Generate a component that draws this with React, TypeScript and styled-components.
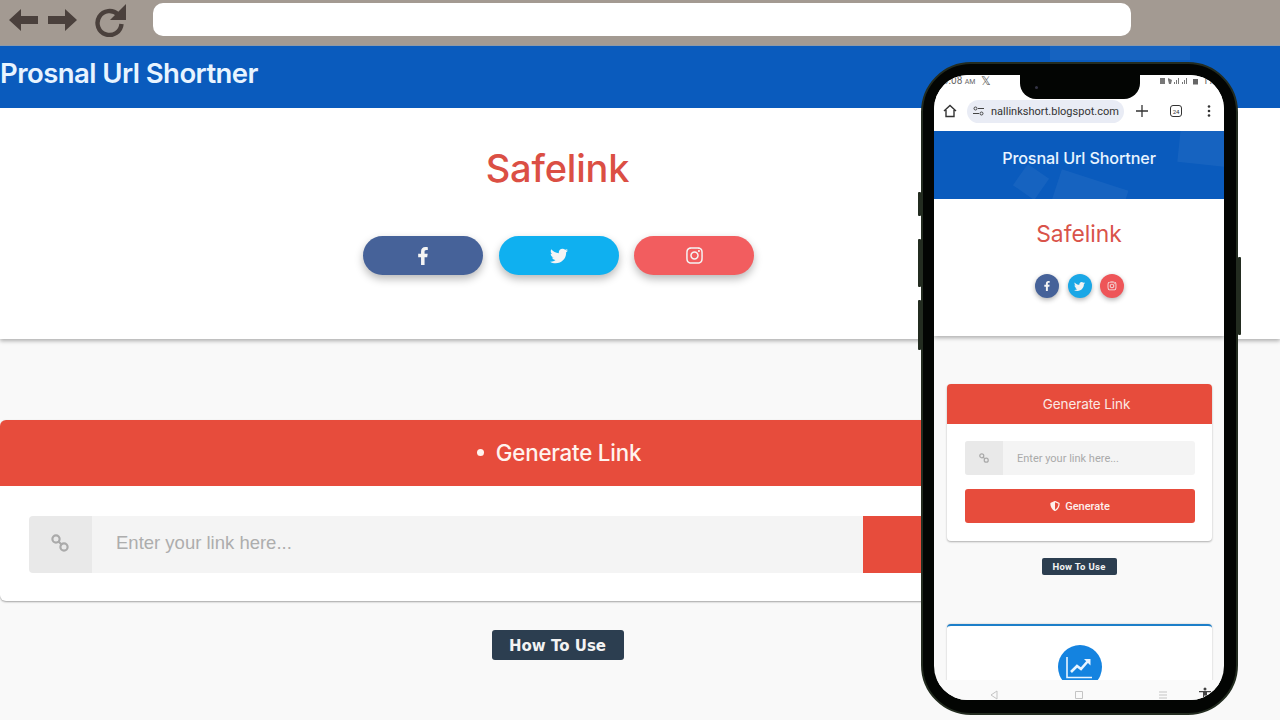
import { FaFacebookF, FaInstagram, FaShieldAlt, FaTwitter } from 'react-icons/fa';
import styled, { createGlobalStyle } from 'styled-components';

const GlobalStyle = createGlobalStyle`
    html, body {
        margin: 0;
        height: 720px;
        overflow: hidden;
        background: #f9f9f9;
        font-family: "Inter", "Liberation Sans", sans-serif;
    }
`;

// two small rings joined on the diagonal, the reference's chain glyph
const ChainIcon = ({ size }: { size: number }) => (
    <svg width={size} height={size} viewBox="0 0 18 18">
        <circle cx="5" cy="5" r="3.6" fill="none" stroke="currentColor" strokeWidth="2.2" />
        <circle cx="13" cy="13" r="3.6" fill="none" stroke="currentColor" strokeWidth="2.2" />
        <path d="M7 7l4 4" stroke="currentColor" strokeWidth="2.2" />
    </svg>
);

const App = () => {
    return (
        <Page>
            <GlobalStyle />
            <BrowserBar>
                <NavIcons>
                    <svg width="29" height="24" viewBox="0 0 29 24"><path d="M0 12 12 1v7h17v8H12v7z" fill="#4a403c" /></svg>
                    <svg width="29" height="24" viewBox="0 0 29 24"><path d="M29 12 17 1v7H0v8h17v7z" fill="#4a403c" /></svg>
                    <ReloadIcon width="34" height="34" viewBox="0 0 34 34">
                        <path d="M24 11.500A12 12 0 1 0 27.500 21" fill="none" stroke="#4a403c" strokeWidth="4.400" />
                        <path d="M32 1v16H16z" fill="#4a403c" />
                    </ReloadIcon>
                </NavIcons>
                <UrlBar />
            </BrowserBar>

            <SiteHeader>
                <Deco $x={1050} $y={-6} $w={140} $h={20} $rotate={0} />
                <SiteTitle>Prosnal Url Shortner</SiteTitle>
            </SiteHeader>

            <Hero>
                <HeroTitle>Safelink</HeroTitle>
                <SocialRow>
                    <SocialPill $color="#466299"><FaFacebookF size={18} /></SocialPill>
                    <SocialPill $color="#0fb0f0"><FaTwitter size={18} /></SocialPill>
                    <SocialPill $color="#f25d5f"><FaInstagram size={19} /></SocialPill>
                </SocialRow>
            </Hero>

            <Main>
                <Card>
                    <CardHead><Bullet />Generate Link</CardHead>
                    <CardBody>
                        <IconBox><ChainIcon size={18} /></IconBox>
                        <FakeInput>Enter your link here...</FakeInput>
                        <SubmitBlock />
                    </CardBody>
                </Card>
                <HowTo>How To Use</HowTo>
            </Main>

            <Phone>
                <SideKey $side="left" $top={128} $h={24} />
                <SideKey $side="left" $top={175} $h={48} />
                <SideKey $side="left" $top={236} $h={50} />
                <SideKey $side="right" $top={193} $h={78} />
                <Screen>
                    <Notch><NotchDot /></Notch>
                    <StatusBar>
                        <StatusTime>9:08 <small>AM</small></StatusTime>
                        <StatusX>𝕏</StatusX>
                        <StatusRight>
                            <svg width="40" height="8" viewBox="0 0 40 8">
                                <path d="M0 1h5v6H0zM8 1l4 2-1 4H9L8 3zM14 7V5h1v2zM16 7V3h1v4zM18 7V1h1v6zM22 7V5h1v2zM24 7V3h1v4zM26 7V1h1v6z" fill="#777" />
                                <path d="M33 2h5v5.500h-5z" fill="#666" />
                            </svg>
                            <span>17</span>
                        </StatusRight>
                    </StatusBar>
                    <Toolbar>
                        <svg width="14" height="14" viewBox="0 0 14 14"><path d="M1 7 7 1.500 13 7M3 6v6.500h8V6" fill="none" stroke="#333" strokeWidth="1.400" /></svg>
                        <Omnibox>
                            <svg width="11" height="10" viewBox="0 0 11 10">
                                <circle cx="2.500" cy="2.500" r="1.500" fill="none" stroke="#444" />
                                <circle cx="8.500" cy="7.500" r="1.500" fill="none" stroke="#444" />
                                <path d="M5 2.500h6M0 7.500h6" stroke="#444" />
                            </svg>
                            <OmniText>nallinkshort.blogspot.com</OmniText>
                        </Omnibox>
                        <PlusIcon width="12" height="12" viewBox="0 0 12 12"><path d="M6 0v12M0 6h12" stroke="#333" strokeWidth="1.300" /></PlusIcon>
                        <TabCount>24</TabCount>
                        <MenuDots width="4" height="12" viewBox="0 0 4 12"><circle cx="2" cy="1.500" r="1.300" fill="#333" /><circle cx="2" cy="6" r="1.300" fill="#333" /><circle cx="2" cy="10.500" r="1.300" fill="#333" /></MenuDots>
                    </Toolbar>

                    <MiniHeader>
                        <Deco $x={245} $y={-2} $w={60} $h={36} $rotate={6} />
                        <Deco $x={84} $y={38} $w={26} $h={26} $rotate={35} />
                        <Deco $x={120} $y={48} $w={70} $h={40} $rotate={18} />
                        Prosnal Url Shortner
                    </MiniHeader>
                    <MiniHero>
                        <MiniTitle>Safelink</MiniTitle>
                        <MiniSocial>
                            <SocialDot $color="#466299"><FaFacebookF size={10} /></SocialDot>
                            <SocialDot $color="#1aa7e6"><FaTwitter size={11} /></SocialDot>
                            <SocialDot $color="#ee5558"><FaInstagram size={10} /></SocialDot>
                        </MiniSocial>
                    </MiniHero>

                    <MiniMain>
                        <MiniCard>
                            <MiniCardHead>Generate Link</MiniCardHead>
                            <MiniCardBody>
                                <MiniInput>
                                    <MiniIconBox><ChainIcon size={10} /></MiniIconBox>
                                    <MiniPlaceholder>Enter your link here...</MiniPlaceholder>
                                </MiniInput>
                                <MiniGenerate><FaShieldAlt size={10} />Generate</MiniGenerate>
                            </MiniCardBody>
                        </MiniCard>
                        <MiniHowTo>How To Use</MiniHowTo>
                        <StatsCard>
                            <StatsCircle>
                                <svg width="27" height="23" viewBox="0 0 27 23">
                                    <path d="M1 1v20.500h25" fill="none" stroke="currentColor" strokeWidth="1.600" />
                                    <path d="M5 16l6-6 4 3 7-8" fill="none" stroke="currentColor" strokeWidth="2.600" />
                                    <path d="M18 3h6.500v6.500z" fill="currentColor" />
                                </svg>
                            </StatsCircle>
                        </StatsCard>
                    </MiniMain>

                    <SoftNav>
                        <svg width="10" height="10" viewBox="0 0 10 10"><path d="M8 1 2 5l6 4z" fill="none" stroke="#c4c4c4" /></svg>
                        <NavSquare width="10" height="10" viewBox="0 0 10 10"><path d="M1.500 1.500h7v7h-7z" fill="none" stroke="#c4c4c4" /></NavSquare>
                        <NavMenu width="10" height="10" viewBox="0 0 10 10"><path d="M1 2h8M1 5h8M1 8h8" stroke="#c4c4c4" /></NavMenu>
                        <NavPerson width="12" height="12" viewBox="0 0 12 12"><circle cx="6" cy="2" r="1.500" fill="#444" /><path d="M0 4h12v1.300H8V12H6.800V8.500H5.200V12H4V5.300H0z" fill="#444" /></NavPerson>
                    </SoftNav>
                </Screen>
            </Phone>
        </Page>
    );
};
export default App;

const Page = styled.div`
    position: relative;
    width: 1280px;
    height: 720px;
    overflow: hidden;
    display: flex;
    flex-direction: column;
`;

const BrowserBar = styled.div`
    height: 46px;
    box-sizing: border-box;
    flex: none;
    display: flex;
    align-items: flex-start;
    padding: 3px 149px 0 9px;
    background: #a39a92;
    border-bottom: 1px solid #8e9aa8;
`;

const NavIcons = styled.div`
    display: flex;
    align-items: center;
    gap: 10px;
    width: 144px;
    flex: none;
    height: 32px;
    padding-top: 1px;
`;

const ReloadIcon = styled.svg`
    margin-left: 7px;
`;

const UrlBar = styled.div`
    flex: 1;
    height: 33px;
    border-radius: 10px;
    background: #fff;
`;

const SiteHeader = styled.header`
    position: relative;
    overflow: hidden;
    height: 62px;
    flex: none;
    display: flex;
    align-items: center;
    background: #0a5bbd;
    z-index: 1;
`;

const Deco = styled.span<{ $x: number; $y: number; $w: number; $h: number; $rotate: number }>`
    position: absolute;
    left: ${p => p.$x}px;
    top: ${p => p.$y}px;
    width: ${p => p.$w}px;
    height: ${p => p.$h}px;
    transform: rotate(${p => p.$rotate}deg);
    background: rgba(255, 255, 255, 0.05);
`;

const SiteTitle = styled.h1`
    margin: 0 0 6px;
    color: #e8f4ff;
    font-size: 27.500px;
    font-weight: 600;
    line-height: 1;
    letter-spacing: -0.55px;
    white-space: nowrap;
`;

const Hero = styled.section`
    height: 231px;
    box-sizing: border-box;
    flex: none;
    padding: 36px 165px 0 0;
    display: flex;
    flex-direction: column;
    align-items: center;
    background: #fff;
    box-shadow: 0 2px 4px rgba(0, 0, 0, 0.3);
`;

const HeroTitle = styled.h2`
    margin: 0;
    height: 48px;
    color: #db4f44;
    font-size: 38px;
    font-weight: 500;
    line-height: 48px;
    letter-spacing: -0.2px;
`;

const SocialRow = styled.div`
    display: flex;
    gap: 15.500px;
    margin: 44px 0 0 2px;
`;

const SocialPill = styled.span<{ $color: string }>`
    width: 120px;
    height: 39px;
    border-radius: 20px;
    display: flex;
    align-items: center;
    justify-content: center;
    color: #f4f4f4;
    background: ${p => p.$color};
    box-shadow: 0 4px 8px rgba(0, 0, 0, 0.28);
`;

const Main = styled.main`
    width: 1115px;
    padding-top: 81px;
    display: flex;
    flex-direction: column;
    align-items: center;
`;

const Card = styled.section`
    width: 100%;
    height: 181px;
    border-radius: 6px;
    overflow: hidden;
    background: #fff;
    box-shadow: 0 1px 2px rgba(0, 0, 0, 0.35);
`;

const CardHead = styled.div`
    height: 66px;
    padding: 0 0 2px 3px;
    box-sizing: border-box;
    display: flex;
    align-items: center;
    justify-content: center;
    gap: 12px;
    color: #fff3ee;
    background: #e74c3c;
    font-size: 22.300px;
    font-weight: 500;
    letter-spacing: -0.2px;
`;

const Bullet = styled.span`
    width: 7px;
    height: 7px;
    border-radius: 50%;
    background: #fff3ee;
`;

const CardBody = styled.div`
    display: flex;
    height: 57px;
    margin: 30px 0 0 29px;
`;

const IconBox = styled.div`
    width: 63px;
    box-sizing: border-box;
    padding: 0 2px 3px 0;
    flex: none;
    display: flex;
    align-items: center;
    justify-content: center;
    border-radius: 4px 0 0 4px;
    color: #aaa;
    background: #e9e9e9;
`;

const FakeInput = styled.div`
    flex: 1;
    padding: 0 0 3px 24px;
    display: flex;
    align-items: center;
    color: #adadad;
    background: #f4f4f4;
    font-family: "Liberation Sans", Arial, sans-serif;
    font-size: 18.500px;
`;

const SubmitBlock = styled.div`
    width: 252px;
    flex: none;
    background: #e74c3c;
`;

const HowTo = styled.div`
    width: 132px;
    height: 30px;
    margin-top: 29px;
    padding-top: 1px;
    box-sizing: border-box;
    border-radius: 3px;
    display: flex;
    align-items: center;
    justify-content: center;
    color: #f3f3f3;
    background: #2c3e50;
    font-family: "DejaVu Sans", sans-serif;
    font-size: 15px;
    font-weight: 700;
`;

const Phone = styled.div`
    position: absolute;
    z-index: 2;
    left: 921px;
    top: 62px;
    width: 317px;
    height: 653px;
    box-sizing: border-box;
    border: 2px solid #232c20;
    border-radius: 50px;
    background: #030503;
    padding: 11px 12px 13px 11px;
`;

const SideKey = styled.span<{ $side: 'left' | 'right'; $top: number; $h: number }>`
    position: absolute;
    ${p => p.$side}: -5px;
    top: ${p => p.$top}px;
    width: 3px;
    height: ${p => p.$h}px;
    border-radius: 1px;
    background: #232c20;
`;

const Screen = styled.div`
    position: relative;
    height: 100%;
    display: flex;
    flex-direction: column;
    overflow: hidden;
    border-radius: 34px;
    background: #f9f9f9;
    font-family: "Inter", sans-serif;
`;

const Notch = styled.div`
    position: absolute;
    z-index: 3;
    top: 0;
    left: 86px;
    width: 120px;
    height: 24px;
    display: flex;
    align-items: center;
    justify-content: flex-start;
    padding-left: 15px;
    box-sizing: border-box;
    border-radius: 0 0 16px 16px;
    background: #030503;
`;

const NotchDot = styled.span`
    width: 3px;
    height: 3px;
    border-radius: 50%;
    background: #334;
`;

const StatusBar = styled.div`
    height: 22px;
    flex: none;
    display: flex;
    align-items: center;
    gap: 6px;
    padding: 0 0 11px 9px;
    box-sizing: border-box;
    background: #fff;
    color: #666;
    font-family: "Roboto", sans-serif;
    font-size: 10px;
`;

const StatusTime = styled.span`
    small {
        font-size: 7px;
    }
`;

const StatusX = styled.span`
    color: #555;
    font-size: 12px;
`;

const StatusRight = styled.span`
    margin-left: auto;
    margin-right: 9px;
    display: flex;
    align-items: center;
    gap: 3px;
    font-size: 10px;
    letter-spacing: 0.5px;
`;

const Toolbar = styled.div`
    height: 34px;
    flex: none;
    box-sizing: border-box;
    padding: 0 0 6px 9px;
    display: flex;
    align-items: center;
    background: #fff;
`;

const Omnibox = styled.div`
    width: 157px;
    height: 23px;
    flex: none;
    margin-left: 10px;
    box-sizing: border-box;
    padding-left: 6px;
    border-radius: 12px;
    display: flex;
    align-items: center;
    gap: 7px;
    background: #e9ecf5;
`;

const OmniText = styled.span`
    color: #333;
    font-family: "Roboto", sans-serif;
    font-size: 11px;
    white-space: nowrap;
`;

const PlusIcon = styled.svg`
    margin-left: 12px;
`;

const TabCount = styled.span`
    width: 10px;
    height: 10px;
    margin-left: 22px;
    border: 1.300px solid #333;
    border-radius: 3px;
    display: flex;
    align-items: center;
    justify-content: center;
    color: #333;
    font-family: "Roboto", sans-serif;
    font-size: 6px;
`;

const MenuDots = styled.svg`
    margin-left: 25px;
`;

const MiniHeader = styled.div`
    position: relative;
    overflow: hidden;
    height: 68px;
    flex: none;
    box-sizing: border-box;
    padding-top: 17px;
    text-align: center;
    color: #e8f4ff;
    background: #0a5bbd;
    font-size: 16.200px;
    font-weight: 500;
    letter-spacing: -0.15px;
`;

const MiniHero = styled.div`
    height: 137px;
    flex: none;
    box-sizing: border-box;
    padding-top: 21px;
    display: flex;
    flex-direction: column;
    align-items: center;
    background: #fff;
    box-shadow: 0 2px 4px rgba(0, 0, 0, 0.3);
`;

const MiniTitle = styled.div`
    color: #d9534a;
    font-size: 22.800px;
    line-height: 28px;
`;

const MiniSocial = styled.div`
    display: flex;
    gap: 8.500px;
    margin: 26px 0 0 1px;
`;

const SocialDot = styled.span<{ $color: string }>`
    width: 24px;
    height: 24px;
    border-radius: 50%;
    display: flex;
    align-items: center;
    justify-content: center;
    color: #f3f3f3;
    background: ${p => p.$color};
    box-shadow: 0 2px 5px rgba(0, 0, 0, 0.3);
`;

const MiniMain = styled.div`
    flex: 1;
    min-height: 0;
    overflow: hidden;
    padding: 48px 12px 0 13px;
    display: flex;
    flex-direction: column;
    align-items: center;
`;

const MiniCard = styled.div`
    width: 100%;
    flex: none;
    height: 157px;
    border-radius: 4px;
    overflow: hidden;
    background: #fff;
    box-shadow: 0 1px 2px rgba(0, 0, 0, 0.3);
`;

const MiniCardHead = styled.div`
    height: 40px;
    box-sizing: border-box;
    padding-left: 14px;
    display: flex;
    align-items: center;
    justify-content: center;
    color: #fbe9e4;
    background: #e74c3c;
    font-size: 13.500px;
    letter-spacing: -0.1px;
`;

const MiniCardBody = styled.div`
    padding: 17px 17px 0 18px;
    display: flex;
    flex-direction: column;
    gap: 14px;
`;

const MiniInput = styled.div`
    height: 34px;
    display: flex;
    border-radius: 3px;
    overflow: hidden;
    background: #f4f4f4;
`;

const MiniIconBox = styled.span`
    width: 38px;
    display: flex;
    align-items: center;
    justify-content: center;
    color: #aaa;
    background: #e9e9e9;
`;

const MiniPlaceholder = styled.span`
    padding-left: 14px;
    align-self: center;
    color: #aaa;
    font-family: "Roboto", sans-serif;
    font-size: 11px;
`;

const MiniGenerate = styled.div`
    height: 34px;
    border-radius: 3px;
    display: flex;
    align-items: center;
    justify-content: center;
    gap: 5px;
    color: #fdf0ec;
    background: #e74c3c;
    font-family: "Roboto", sans-serif;
    font-size: 11px;
    font-weight: 500;
`;

const MiniHowTo = styled.div`
    width: 75px;
    height: 17px;
    flex: none;
    margin: 17px 0 0 -1px;
    border-radius: 2px;
    display: flex;
    align-items: center;
    justify-content: center;
    color: #f3f3f3;
    background: #2c3e50;
    font-family: "Roboto", sans-serif;
    font-size: 9.500px;
    font-weight: 700;
    letter-spacing: 0.3px;
`;

const StatsCard = styled.div`
    width: 100%;
    flex: none;
    height: 80px;
    margin-top: 49px;
    box-sizing: border-box;
    padding-top: 19px;
    display: flex;
    justify-content: center;
    border-top: 2px solid #1d7fc9;
    border-radius: 4px 4px 0 0;
    background: #fff;
    box-shadow: 0 0 2px rgba(0, 0, 0, 0.25);
`;

const StatsCircle = styled.div`
    width: 44px;
    height: 44px;
    border-radius: 50%;
    display: flex;
    align-items: center;
    justify-content: center;
    color: #e8f4ff;
    background: #1483e0;
`;

const SoftNav = styled.div`
    height: 20px;
    flex: none;
    box-sizing: border-box;
    padding: 10px 0 0 55px;
    display: flex;
    align-items: center;
    background: #fafafa;
`;

const NavSquare = styled.svg`
    margin-left: 75px;
`;

const NavMenu = styled.svg`
    margin-left: 74px;
`;

const NavPerson = styled.svg`
    margin-left: 31px;
    margin-top: -4px;
`;
